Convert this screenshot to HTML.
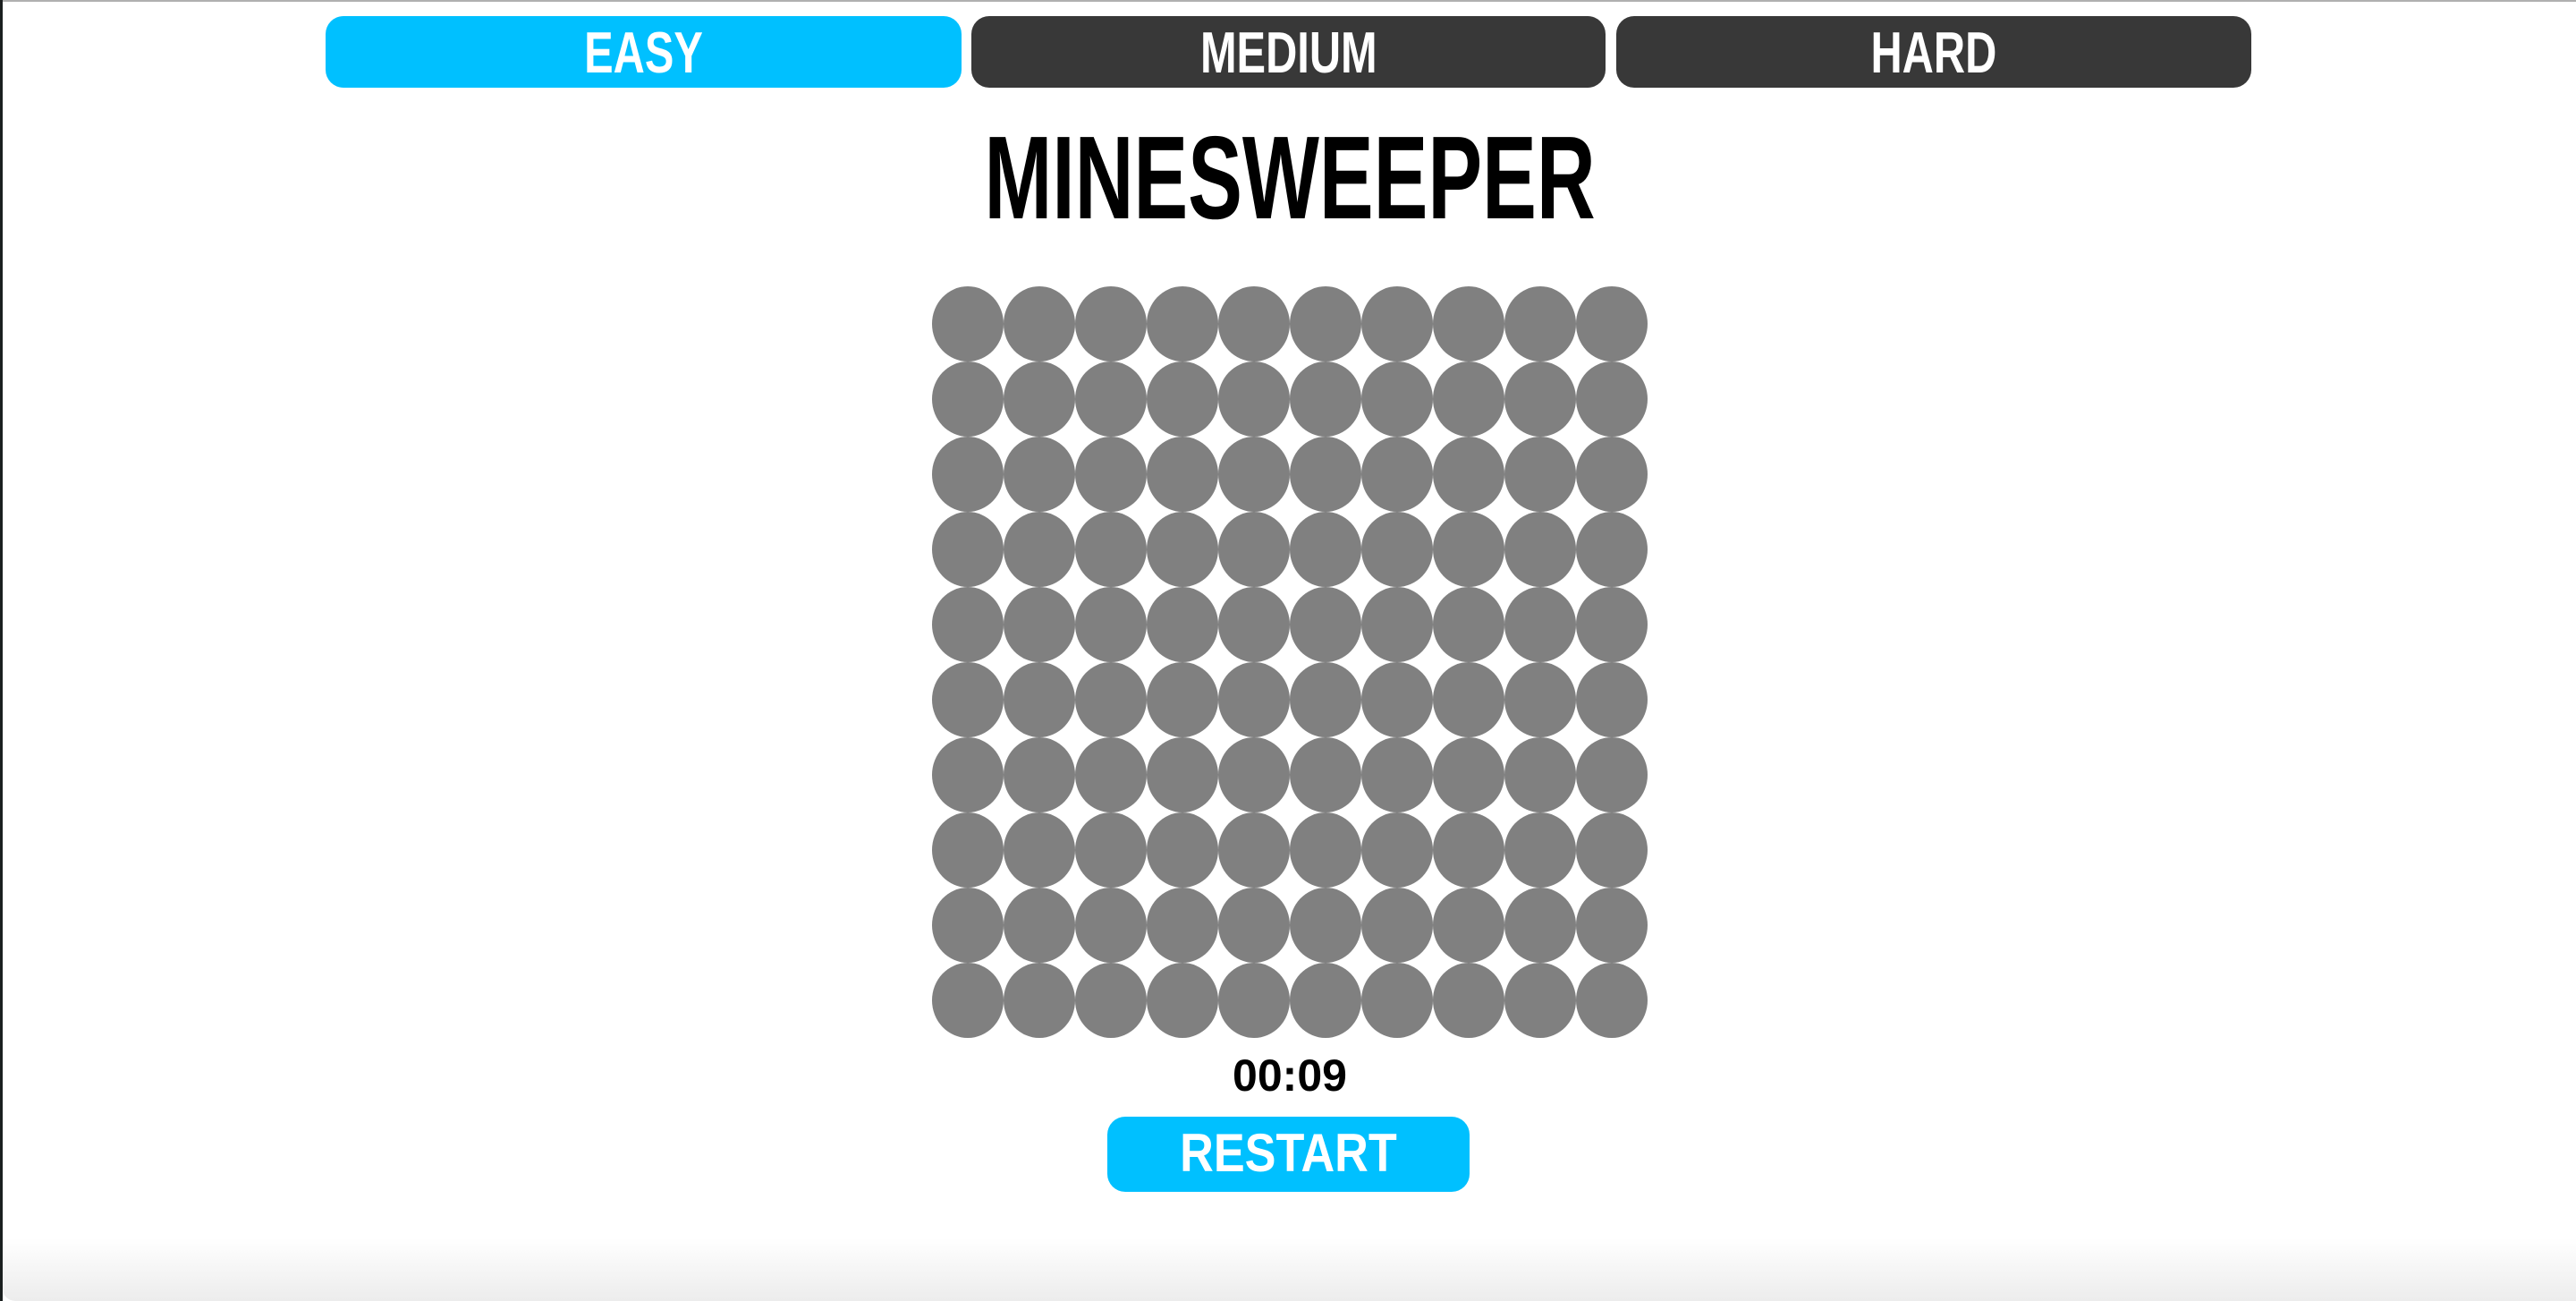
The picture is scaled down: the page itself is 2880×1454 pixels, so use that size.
<!DOCTYPE html>
<html><head><meta charset="utf-8"><style>
html,body{margin:0;padding:0;}
body{width:2880px;height:1454px;position:relative;overflow:hidden;background:#fff;font-family:"Liberation Sans",sans-serif;}
.top{position:absolute;left:0;top:0;width:2880px;height:2px;background:#b0b0b0;}
.left{position:absolute;left:0;top:0;width:3px;height:1454px;background:#1a1f1f;}
.shade{position:absolute;left:3px;right:0;bottom:0;height:70px;background:linear-gradient(#fff,#ececec);border-bottom-left-radius:14px;}
.btn{position:absolute;top:18px;height:80px;border-radius:20px;}
.t{position:absolute;left:0;right:0;text-align:center;font-weight:bold;white-space:nowrap;line-height:1;}
.t span{display:inline-block;}
.grid{position:absolute;left:1042px;top:320px;width:800px;}
.c{position:absolute;width:80px;height:84px;border-radius:50%;background:#808080;}
</style></head><body>
<div class="top"></div><div class="left"></div><div class="shade"></div>
<div class="btn" style="left:364px;width:711px;background:#00c0ff"><div class="t" style="top:8px;font-size:65px;color:#fff"><span style="transform:scaleX(0.75)">EASY</span></div></div>
<div class="btn" style="left:1086px;width:709px;background:#383838"><div class="t" style="top:8px;font-size:65px;color:#fff"><span style="transform:scaleX(0.75)">MEDIUM</span></div></div>
<div class="btn" style="left:1807px;width:710px;background:#383838"><div class="t" style="top:8px;font-size:65px;color:#fff"><span style="transform:scaleX(0.75)">HARD</span></div></div>
<div class="t" style="top:133px;font-size:132px;color:#000;left:0;width:2884px"><span style="transform:scaleX(0.69)">MINESWEEPER</span></div>
<div class="grid" id="g"></div>
<div class="t" style="top:1177px;font-size:50px;color:#000;width:2884px"><span>00:09</span></div>
<div style="position:absolute;left:1238px;top:1248px;width:405px;height:84px;border-radius:20px;background:#00c0ff"><div class="t" style="top:11px;font-size:60px;color:#fff"><span style="transform:scaleX(0.87)">RESTART</span></div></div>
<div class="grid">
<script>
var h='';for(var r=0;r<10;r++)for(var c=0;c<10;c++)h+='<div class="c" style="left:'+(c*80)+'px;top:'+(r*84)+'px"></div>';document.write(h);
</script>
</div>
</body></html>
